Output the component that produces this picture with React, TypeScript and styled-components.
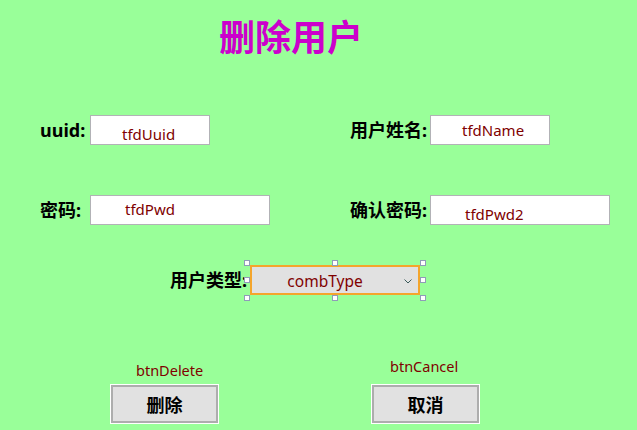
import styled, { createGlobalStyle } from "styled-components"

const GlobalStyle = createGlobalStyle`
  html, body {
    margin: 0;
    padding: 0;
    background-color: #99ff99;
  }
  body {
    font-family: "Noto Sans", "Noto Sans CJK SC", sans-serif;
  }
`

const Page = styled.div`
  display: flex;
  flex-direction: column;
  width: 637px;
  height: 430px;
  box-sizing: border-box;
  padding-bottom: 7px;
  background-color: #99ff99;
  overflow: hidden;
`

const Title = styled.h1`
  margin: 14px 0 0;
  padding-left: 219px;
  font-size: 36px;
  line-height: 42px;
  font-weight: 700;
  color: #cc00cc;
  font-family: "Noto Sans CJK SC", sans-serif;
`

const FieldGrid = styled.div`
  display: grid;
  grid-template-columns: 310px auto;
  row-gap: 50px;
  margin-top: 59px;
  padding-left: 40px;
`

const Field = styled.div`
  display: flex;
  align-items: center;
`

const Label = styled.span<{ $width: number }>`
  width: ${(p) => p.$width}px;
  flex: none;
  font-size: 18px;
  font-weight: 700;
  line-height: 22px;
  color: #000;
  white-space: nowrap;
`

const TextBox = styled.div<{ $width: number; $dx: number; $dy: number }>`
  width: ${(p) => p.$width}px;
  height: 30px;
  box-sizing: border-box;
  border: 1px solid #b2b2b6;
  background-color: #fff;
  padding: ${(p) => p.$dy}px 0 0 ${(p) => p.$dx}px;
  font-size: 15px;
  line-height: 15px;
  color: #800000;
`

const ComboRow = styled.div`
  display: flex;
  align-items: center;
  margin-top: 40px;
  padding-left: 170px;
`

const ComboFrame = styled.div`
  position: relative;
`

const Combo = styled.div`
  display: flex;
  align-items: center;
  width: 170px;
  height: 30px;
  box-sizing: border-box;
  border: 2px solid #f4a52c;
  background-color: #e1e1e1;
  color: #800000;
  font-size: 15.5px;
`

const ComboText = styled.span`
  flex: 1;
  text-align: center;
  padding-top: 2px;
`

const ComboArrow = styled.span`
  display: flex;
  justify-content: center;
  width: 20px;
  padding-top: 3px;
`

const Handle = styled.span<{ $x: "left" | "mid" | "right"; $y: "top" | "mid" | "bottom" }>`
  position: absolute;
  width: 6px;
  height: 6px;
  box-sizing: border-box;
  border: 1px solid #8f9cb8;
  background-color: #fff;
  left: ${(p) => (p.$x === "left" ? "-6px" : p.$x === "mid" ? "82px" : "170px")};
  top: ${(p) => (p.$y === "top" ? "-5px" : p.$y === "mid" ? "12px" : "30px")};
`

const ActionRow = styled.div`
  display: flex;
  align-items: flex-end;
  gap: 152px;
  margin-top: auto;
  padding-left: 110px;
`

const Action = styled.div`
  display: flex;
  flex-direction: column;
  width: 109px;
`

const Caption = styled.span<{ $dx: number; $gap: number }>`
  margin: 0 0 ${(p) => p.$gap}px ${(p) => p.$dx}px;
  font-size: 14.5px;
  line-height: 17px;
  color: #800000;
`

const Button = styled.button`
  width: 107px;
  height: 38px;
  margin: 0 1px;
  box-sizing: border-box;
  border: 2px solid #adadad;
  box-shadow: 0 0 0 1px #ffffff;
  background-color: #e1e1e1;
  font-family: "Noto Sans CJK SC", sans-serif;
  font-size: 18px;
  font-weight: 700;
  color: #000;
  padding: 0;
`

const handles: { x: "left" | "mid" | "right"; y: "top" | "mid" | "bottom" }[] = [
  { x: "left", y: "top" },
  { x: "mid", y: "top" },
  { x: "right", y: "top" },
  { x: "left", y: "mid" },
  { x: "right", y: "mid" },
  { x: "left", y: "bottom" },
  { x: "mid", y: "bottom" },
  { x: "right", y: "bottom" },
]

export default function App() {
  return (
    <>
      <GlobalStyle />
      <Page>
        <Title>删除用户</Title>
        <FieldGrid>
          <Field>
            <Label $width={50}>uuid:</Label>
            <TextBox $width={120} $dx={31} $dy={11}>tfdUuid</TextBox>
          </Field>
          <Field>
            <Label $width={80}>用户姓名:</Label>
            <TextBox $width={120} $dx={31} $dy={7}>tfdName</TextBox>
          </Field>
          <Field>
            <Label $width={50}>密码:</Label>
            <TextBox $width={180} $dx={34} $dy={6}>tfdPwd</TextBox>
          </Field>
          <Field>
            <Label $width={80}>确认密码:</Label>
            <TextBox $width={180} $dx={34} $dy={11}>tfdPwd2</TextBox>
          </Field>
        </FieldGrid>
        <ComboRow>
          <Label $width={80}>用户类型:</Label>
          <ComboFrame>
            <Combo>
              <ComboText>combType</ComboText>
              <ComboArrow>
                <svg width="8" height="5" viewBox="0 0 8 5">
                  <polyline points="0.5,0.5 4,4 7.5,0.5" fill="none" stroke="#3c5a5a" strokeWidth="1" />
                </svg>
              </ComboArrow>
            </Combo>
            {handles.map((h) => (
              <Handle key={h.x + h.y} $x={h.x} $y={h.y} />
            ))}
          </ComboFrame>
        </ComboRow>
        <ActionRow>
          <Action>
            <Caption $dx={26} $gap={6}>btnDelete</Caption>
            <Button>删除</Button>
          </Action>
          <Action>
            <Caption $dx={19} $gap={10}>btnCancel</Caption>
            <Button>取消</Button>
          </Action>
        </ActionRow>
      </Page>
    </>
  )
}
